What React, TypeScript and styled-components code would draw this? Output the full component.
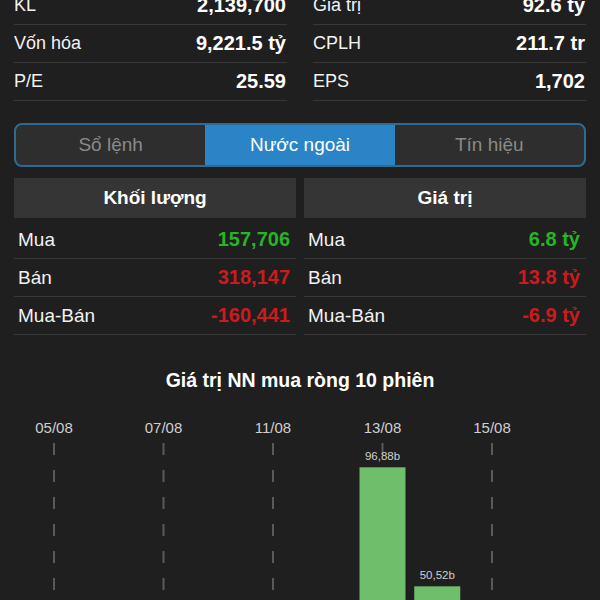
import React from 'react';
import styled, { createGlobalStyle } from 'styled-components';

const GlobalStyle = createGlobalStyle`
  html, body {
    margin: 0;
    padding: 0;
    background: #1f1f1f;
    overflow: hidden;
  }
  body {
    font-family: 'Liberation Sans', Arial, sans-serif;
    color: #fff;
  }
`;

const Page = styled.div`
  width: 600px;
  height: 600px;
  padding: 0 14px;
  box-sizing: border-box;
  overflow: hidden;
`;

const StatsGrid = styled.div`
  display: grid;
  grid-template-columns: 1fr 1fr;
  column-gap: 26px;
  margin-top: -13px;
`;

const StatRow = styled.div`
  height: 37px;
  border-bottom: 1px solid #383838;
  display: flex;
  align-items: center;
  justify-content: space-between;
`;

const StatLabel = styled.span`
  font-size: 18px;
  color: #f2f2f2;
`;

const StatValue = styled.span`
  font-size: 20px;
  font-weight: 700;
  padding-right: 1px;
`;

const Tabs = styled.div`
  margin-top: 22px;
  height: 44px;
  box-sizing: border-box;
  border: 2px solid #2e6a93;
  border-radius: 8px;
  overflow: hidden;
  display: grid;
  grid-template-columns: repeat(3, 1fr);
  background: #2e2e2e;
`;

const Tab = styled.div<{ $active?: boolean }>`
  display: flex;
  align-items: center;
  justify-content: center;
  font-size: 19px;
  color: ${(p) => (p.$active ? '#ffffff' : '#8a8a8a')};
  background: ${(p) => (p.$active ? '#2a84c5' : 'transparent')};
`;

const Tables = styled.div`
  margin-top: 11px;
  display: grid;
  grid-template-columns: 1fr 1fr;
  column-gap: 8px;
`;

const TableHeader = styled.div`
  height: 40px;
  background: #353535;
  display: flex;
  align-items: center;
  justify-content: center;
  font-size: 19px;
  font-weight: 700;
  margin-bottom: 3px;
`;

const DataRow = styled.div`
  height: 37px;
  border-bottom: 1px solid #383838;
  display: flex;
  align-items: center;
  justify-content: space-between;
  padding: 0 6px 0 4px;
`;

const DataLabel = styled.span`
  font-size: 19px;
  color: #f2f2f2;
`;

const DataValue = styled.span<{ $tone: 'up' | 'down' }>`
  font-size: 20px;
  font-weight: 700;
  color: ${(p) => (p.$tone === 'up' ? '#26b526' : '#cc1b1e')};
`;

const ChartTitle = styled.div`
  margin-top: 34px;
  text-align: center;
  font-size: 19.5px;
  font-weight: 700;
  line-height: 22px;
`;

const ChartSvg = styled.svg`
  display: block;
  margin-top: 9px;
  overflow: visible;
`;

const stats = [
  ['KL', '2,139,700'],
  ['Giá trị', '92.6 tỷ'],
  ['Vốn hóa', '9,221.5 tỷ'],
  ['CPLH', '211.7 tr'],
  ['P/E', '25.59'],
  ['EPS', '1,702'],
];

type Row = { label: string; value: string; tone: 'up' | 'down' };

const tables: { title: string; rows: Row[] }[] = [
  {
    title: 'Khối lượng',
    rows: [
      { label: 'Mua', value: '157,706', tone: 'up' },
      { label: 'Bán', value: '318,147', tone: 'down' },
      { label: 'Mua-Bán', value: '-160,441', tone: 'down' },
    ],
  },
  {
    title: 'Giá trị',
    rows: [
      { label: 'Mua', value: '6.8 tỷ', tone: 'up' },
      { label: 'Bán', value: '13.8 tỷ', tone: 'down' },
      { label: 'Mua-Bán', value: '-6.9 tỷ', tone: 'down' },
    ],
  },
];

// 10 sessions, only every other date is labelled
const sessions: { date: string; value: number | null }[] = [
  { date: '05/08', value: null },
  { date: '06/08', value: null },
  { date: '07/08', value: null },
  { date: '08/08', value: null },
  { date: '11/08', value: null },
  { date: '12/08', value: null },
  { date: '13/08', value: 96.88 },
  { date: '14/08', value: 50.52 },
  { date: '15/08', value: null },
  { date: '18/08', value: null },
];

const BASE = 316;
const SCALE = 2.567;
const STEP = 54.75;
const X0 = 40;

const Chart = () => (
  <ChartSvg width={572} height={330} viewBox="0 0 572 330">
    {sessions.map((s, i) =>
      i % 2 === 0 ? (
        <g key={s.date}>
          <text
            x={X0 + i * STEP}
            y={33}
            fill="#cfcfcf"
            fontSize={15}
            textAnchor="middle"
            fontFamily="Liberation Sans, Arial, sans-serif"
          >
            {s.date}
          </text>
          <line
            x1={X0 + i * STEP}
            x2={X0 + i * STEP}
            y1={43}
            y2={BASE}
            stroke="#5a5a5a"
            strokeWidth={2}
            strokeDasharray="12 15"
          />
        </g>
      ) : null
    )}
    {sessions.map((s, i) => {
      if (s.value == null) return null;
      const cx = X0 + i * STEP;
      const top = BASE - s.value * SCALE;
      return (
        <g key={'b' + s.date}>
          <rect x={cx - 23} y={top} width={46} height={BASE - top} fill="#6fbe6b" />
          <text
            x={cx}
            y={top - 7}
            fill="#d0d0d0"
            fontSize={11.5}
            textAnchor="middle"
            fontFamily="Liberation Sans, Arial, sans-serif"
          >
            {s.value.toFixed(2).replace('.', ',')}b
          </text>
        </g>
      );
    })}
  </ChartSvg>
);

const App = () => (
  <>
    <GlobalStyle />
    <Page>
      <StatsGrid>
        {stats.map(([label, value]) => (
          <StatRow key={label}>
            <StatLabel>{label}</StatLabel>
            <StatValue>{value}</StatValue>
          </StatRow>
        ))}
      </StatsGrid>
      <Tabs>
        <Tab>Sổ lệnh</Tab>
        <Tab $active>Nước ngoài</Tab>
        <Tab>Tín hiệu</Tab>
      </Tabs>
      <Tables>
        {tables.map((t) => (
          <div key={t.title}>
            <TableHeader>{t.title}</TableHeader>
            {t.rows.map((r) => (
              <DataRow key={r.label}>
                <DataLabel>{r.label}</DataLabel>
                <DataValue $tone={r.tone}>{r.value}</DataValue>
              </DataRow>
            ))}
          </div>
        ))}
      </Tables>
      <ChartTitle>Giá trị NN mua ròng 10 phiên</ChartTitle>
      <Chart />
    </Page>
  </>
);

export default App;
